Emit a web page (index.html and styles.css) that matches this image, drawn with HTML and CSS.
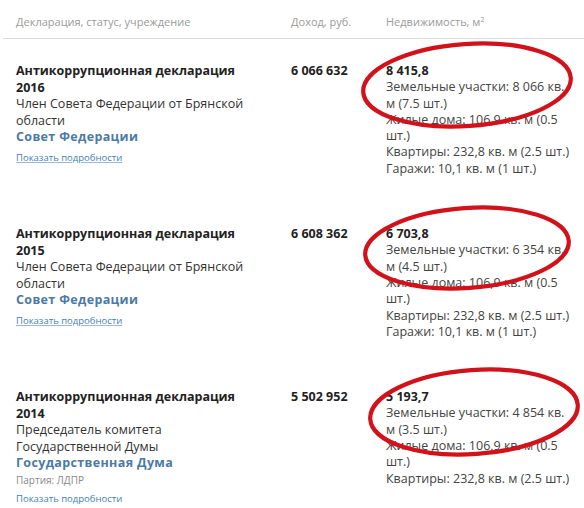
FILE: index.html
```html
<!DOCTYPE html>
<html lang="ru">
<head>
<meta charset="utf-8">
<link rel="stylesheet" href="styles.css">
</head>
<body>
<div class="table">
  <div class="head">
    <div class="h-decl">Декларация, статус, учреждение</div>
    <div class="h-inc">Доход, руб.</div>
    <div class="h-prop">Недвижимость, м<sup>2</sup></div>
  </div>

  <div class="row">
    <div class="decl">
      <div class="title">Антикоррупционная декларация 2016</div>
      <div class="pos">Член Совета Федерации от Брянской области</div>
      <div class="org">Совет Федерации</div>
      <a class="more" href="#">Показать подробности</a>
    </div>
    <div class="inc">6 066 632</div>
    <div class="prop">
      <div class="total">8 415,8</div>
      <div>Земельные участки: 8 066 кв. м (7.5 шт.)</div>
      <div>Жилые дома: 106,9 кв. м (0.5 шт.)</div>
      <div>Квартиры: 232,8 кв. м (2.5 шт.)</div>
      <div>Гаражи: 10,1 кв. м (1 шт.)</div>
    </div>
  </div>

  <div class="row">
    <div class="decl">
      <div class="title">Антикоррупционная декларация 2015</div>
      <div class="pos">Член Совета Федерации от Брянской области</div>
      <div class="org">Совет Федерации</div>
      <a class="more" href="#">Показать подробности</a>
    </div>
    <div class="inc">6 608 362</div>
    <div class="prop">
      <div class="total">6 703,8</div>
      <div>Земельные участки: 6 354 кв. м (4.5 шт.)</div>
      <div>Жилые дома: 106,9 кв. м (0.5 шт.)</div>
      <div>Квартиры: 232,8 кв. м (2.5 шт.)</div>
      <div>Гаражи: 10,1 кв. м (1 шт.)</div>
    </div>
  </div>

  <div class="row">
    <div class="decl">
      <div class="title">Антикоррупционная декларация 2014</div>
      <div class="pos">Председатель комитета Государственной Думы</div>
      <div class="org">Государственная Дума</div>
      <div class="party">Партия: ЛДПР</div>
      <a class="more nou" href="#">Показать подробности</a>
    </div>
    <div class="inc">5 502 952</div>
    <div class="prop">
      <div class="total">5 193,7</div>
      <div>Земельные участки: 4 854 кв. м (3.5 шт.)</div>
      <div>Жилые дома: 106,9 кв. м (0.5 шт.)</div>
      <div>Квартиры: 232,8 кв. м (2.5 шт.)</div>
    </div>
  </div>
</div>

<svg class="marks" width="584" height="508" viewBox="0 0 584 508">
  <ellipse cx="467" cy="85" rx="104" ry="41" transform="rotate(-4 467 85)"/>
  <ellipse cx="467" cy="248" rx="102" ry="40" transform="rotate(-4 467 248)"/>
  <ellipse cx="474" cy="412" rx="104" ry="42" transform="rotate(-4 474 412)"/>
</svg>
</body>
</html>
```

FILE: styles.css
```css
html, body {
  margin: 0;
  padding: 0;
  background: #fff;
}
body {
  font-family: "Open Sans", "DejaVu Sans", sans-serif;
  font-size: 12.5px;
  line-height: 16.3px;
  color: #333;
  position: relative;
  overflow: hidden;
  height: 508px;
}
.table {
  margin-left: 3px;
}
.head, .row {
  display: grid;
  grid-template-columns: 275px 95px 186px;
  padding-left: 13px;
}
.head {
  height: 39px;
  align-items: center;
  border-bottom: 1px solid #dcdcdc;
  color: #9a9a9a;
  font-size: 11px;
  line-height: 14px;
  padding-top: 6px;
  box-sizing: border-box;
}
.head sup {
  font-size: 7px;
  line-height: 0;
  vertical-align: 4px;
}
.row {
  padding-top: 24px;
  padding-bottom: 25px;
}
.title, .inc, .total {
  font-weight: 700;
  color: #222;
}
.decl {
  padding-right: 30px;
  line-height: 16.5px;
}
.pos {
  color: #333;
}
.org {
  font-weight: 700;
  color: #4b7aa6;
  letter-spacing: 0.35px;
}
.party {
  font-size: 10px;
  color: #888;
  line-height: 16.5px;
}
.more {
  display: inline-block;
  margin-top: 4px;
  font-size: 9.5px;
  line-height: 16px;
  color: #3f7fb5;
  text-decoration: underline;
  text-decoration-color: #9cbad6;
}
.more.nou {
  margin-top: 3px;
  text-decoration: none;
}
.prop {
  color: #444;
}
.marks {
  position: absolute;
  left: 0;
  top: 0;
  pointer-events: none;
}
.marks ellipse {
  fill: none;
  stroke: #d2121a;
  stroke-width: 4.2;
}
```
